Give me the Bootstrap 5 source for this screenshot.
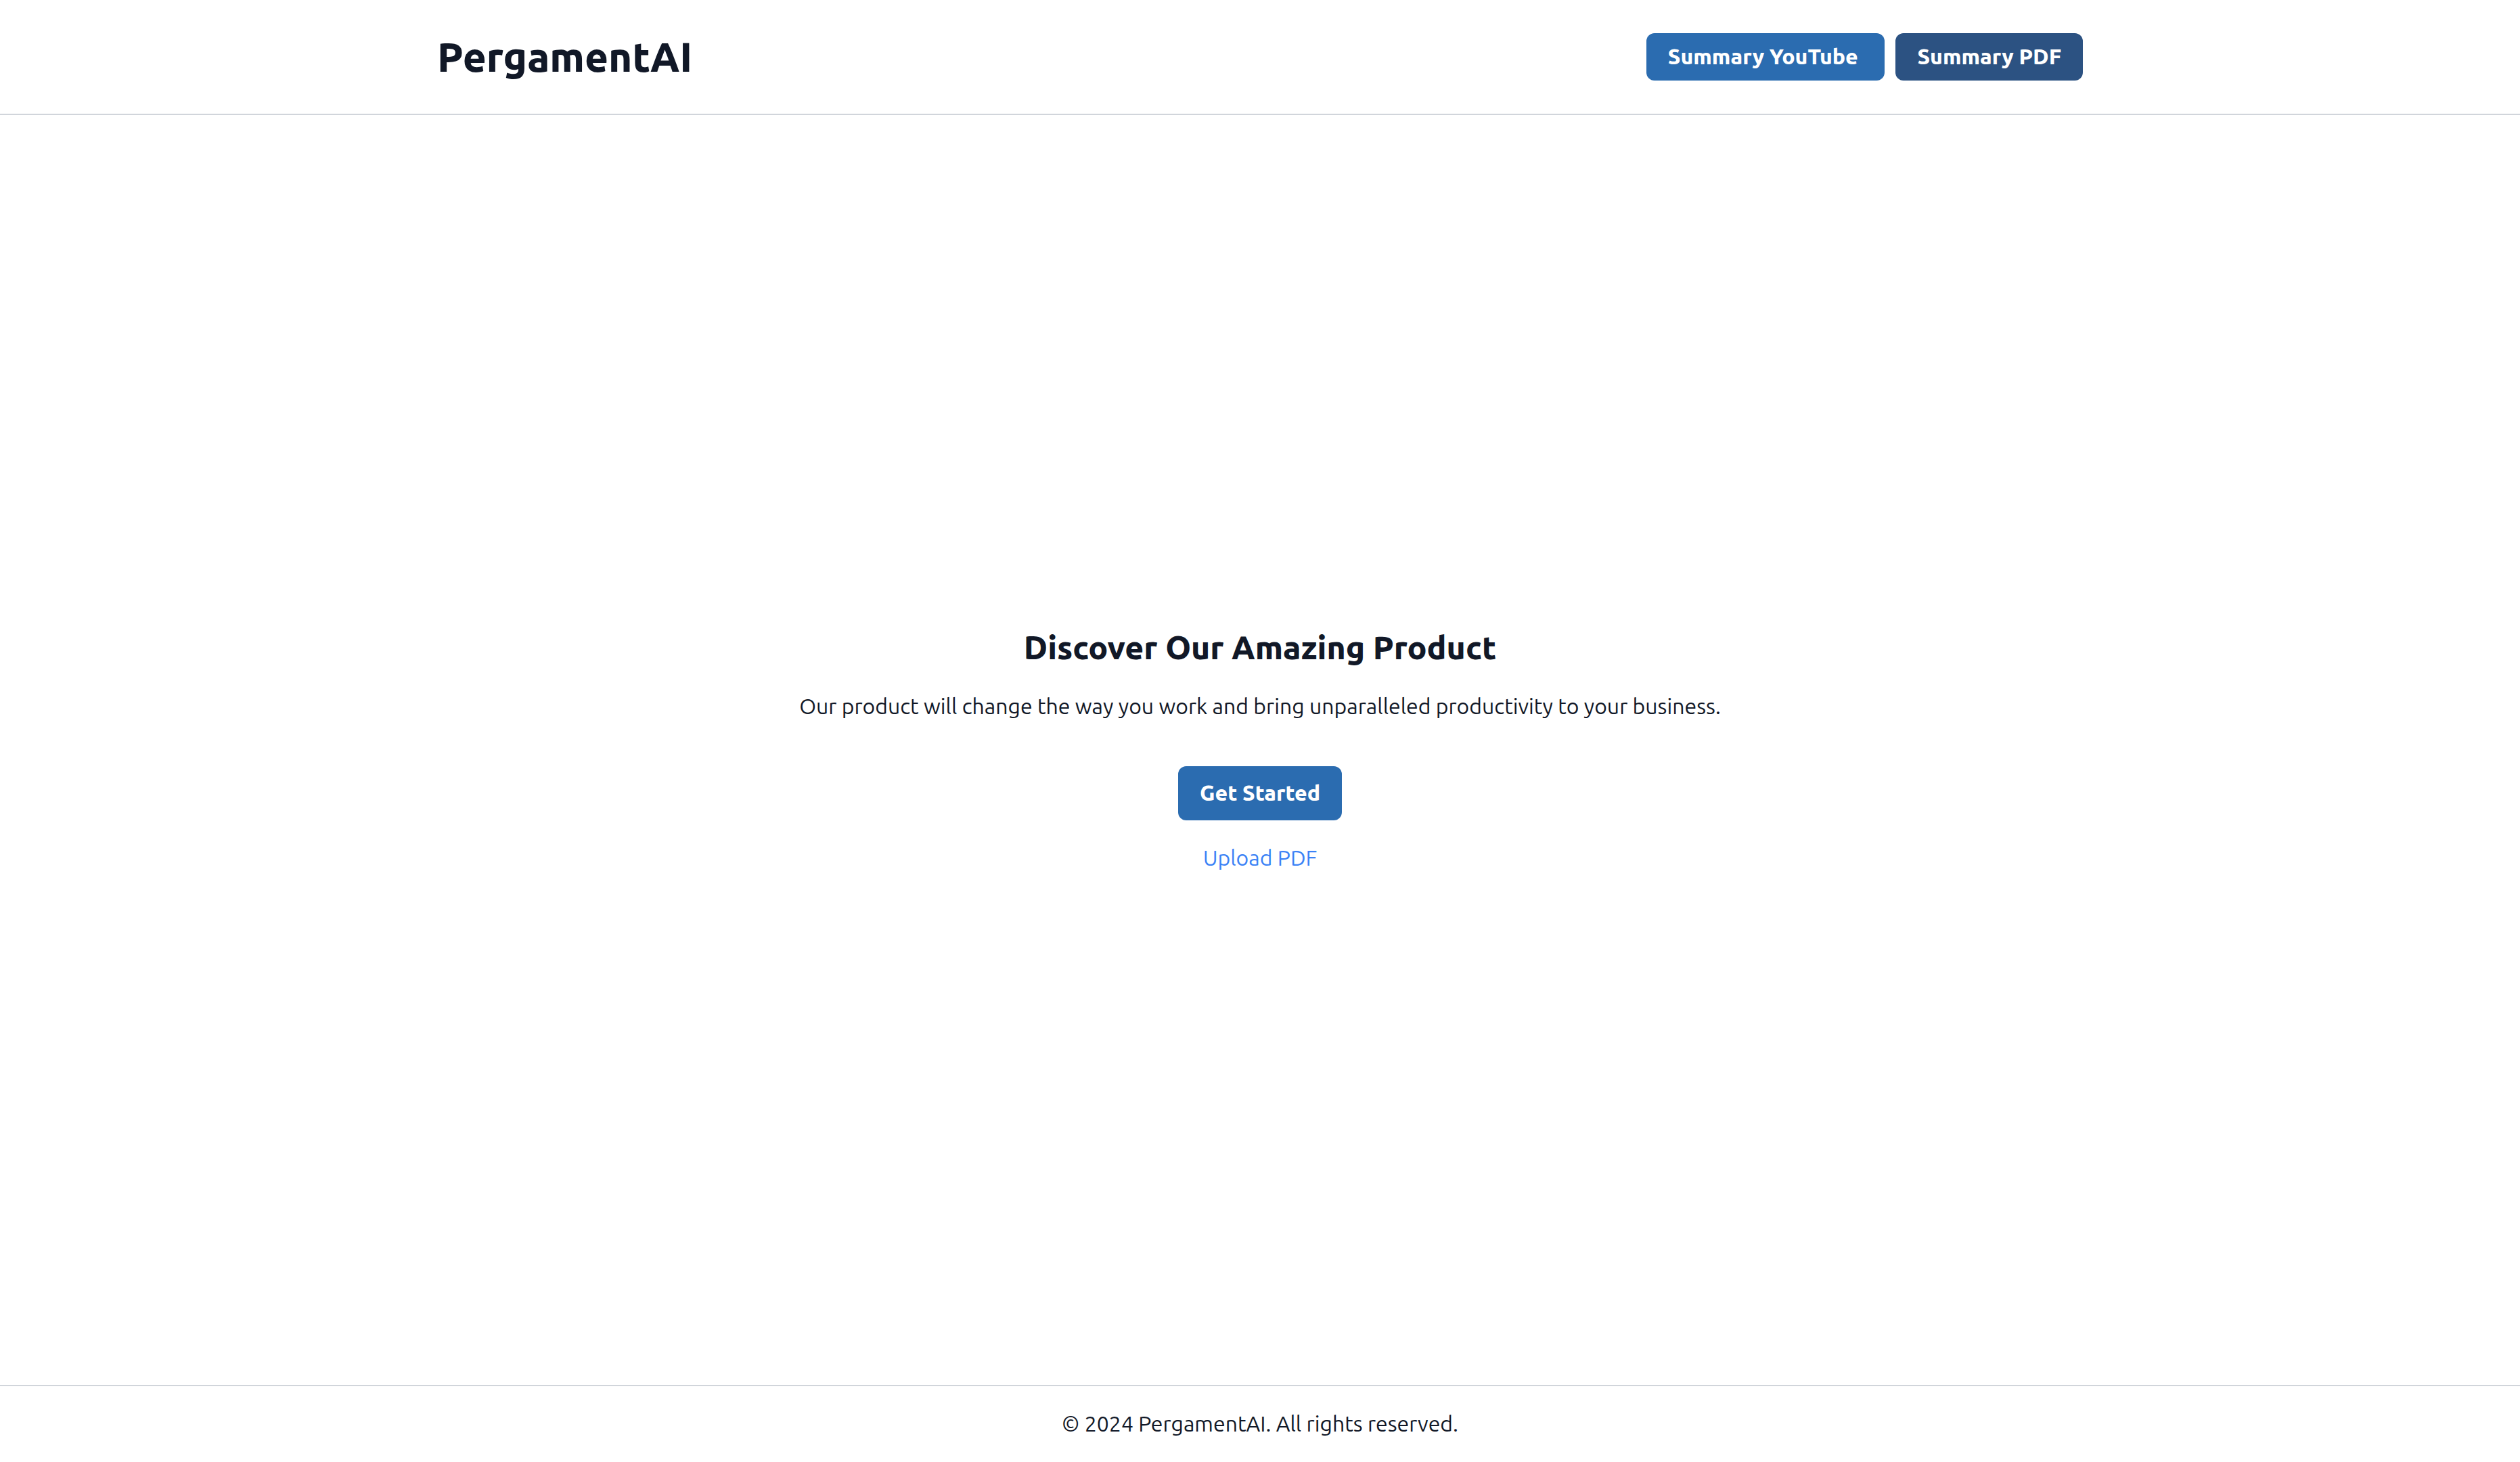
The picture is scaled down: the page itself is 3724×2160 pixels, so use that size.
<!DOCTYPE html>
<html lang="en">
<head>
<meta charset="utf-8">
<meta name="viewport" content="width=device-width, initial-scale=1">
<title>PergamentAI</title>
<link href="https://cdn.jsdelivr.net/npm/bootstrap@5.3.0/dist/css/bootstrap.min.css" rel="stylesheet">
<style>
  body { font-family: Ubuntu, "Noto Sans", sans-serif; font-size: 32px; line-height: 48px; color: #111827; background: #fff; }
  .body-copy { font-family: "Ubuntu Sans", Ubuntu, "Noto Sans", sans-serif; font-variation-settings: "wght" 450; }
  .shell { max-width: 2560px; padding: 48px 64px; }
  .site-header { border-bottom: 2px solid #d1d5db; }
  .site-footer { border-top: 2px solid #d1d5db; padding: 32px; }
  .brand, .hero-title { font-weight: 800; }
  .brand { font-size: 60px; line-height: 72px; color: #111827; }
  .hero-title { font-size: 48px; line-height: 64px; margin-bottom: 32px; }
  .hero-text { margin-bottom: 64px; }
  .actions { gap: 16px; }
  .btn-brand { --bs-btn-color: #fff; --bs-btn-bg: #2b6cb0; --bs-btn-hover-color: #fff; --bs-btn-hover-bg: #2c5282; --bs-btn-border-width: 0; --bs-btn-border-radius: 12px; --bs-btn-font-size: 32px; --bs-btn-line-height: 46px; --bs-btn-font-weight: 800; --bs-btn-padding-x: 32px; padding-top: 16px; padding-bottom: 18px; }
  .btn-nav { padding-top: 11px; padding-bottom: 13px; }
  .btn-deep { --bs-btn-bg: #2c5282; --bs-btn-hover-bg: #2b6cb0; }
  .upload { color: #3b82f6; margin-top: 32px; }
</style>
<script src="https://cdn.jsdelivr.net/npm/bootstrap@5.3.0/dist/js/bootstrap.bundle.min.js"></script>
</head>
<body class="d-flex flex-column min-vh-100">
  <header class="site-header">
    <div class="shell container-fluid d-flex justify-content-between align-items-center">
      <h1 class="brand mb-0">PergamentAI</h1>
      <nav class="actions d-flex" aria-label="Summaries">
        <a class="btn btn-brand btn-nav" href="#youtube">Summary YouTube&nbsp;</a>
        <a class="btn btn-brand btn-nav btn-deep" href="#pdf">Summary PDF</a>
      </nav>
    </div>
  </header>
  <main class="flex-grow-1 d-flex flex-column align-items-center justify-content-center text-center">
    <h2 class="hero-title">Discover Our Amazing Product</h2>
    <p class="hero-text body-copy">Our product will change the way you work and bring unparalleled productivity to your business.</p>
    <button type="button" class="btn btn-brand">Get Started</button>
    <a class="upload body-copy text-decoration-none" href="#upload">Upload PDF</a>
  </main>
  <footer class="site-footer text-center">
    <p class="body-copy mb-0">© 2024 PergamentAI. All rights reserved.</p>
  </footer>
</body>
</html>
